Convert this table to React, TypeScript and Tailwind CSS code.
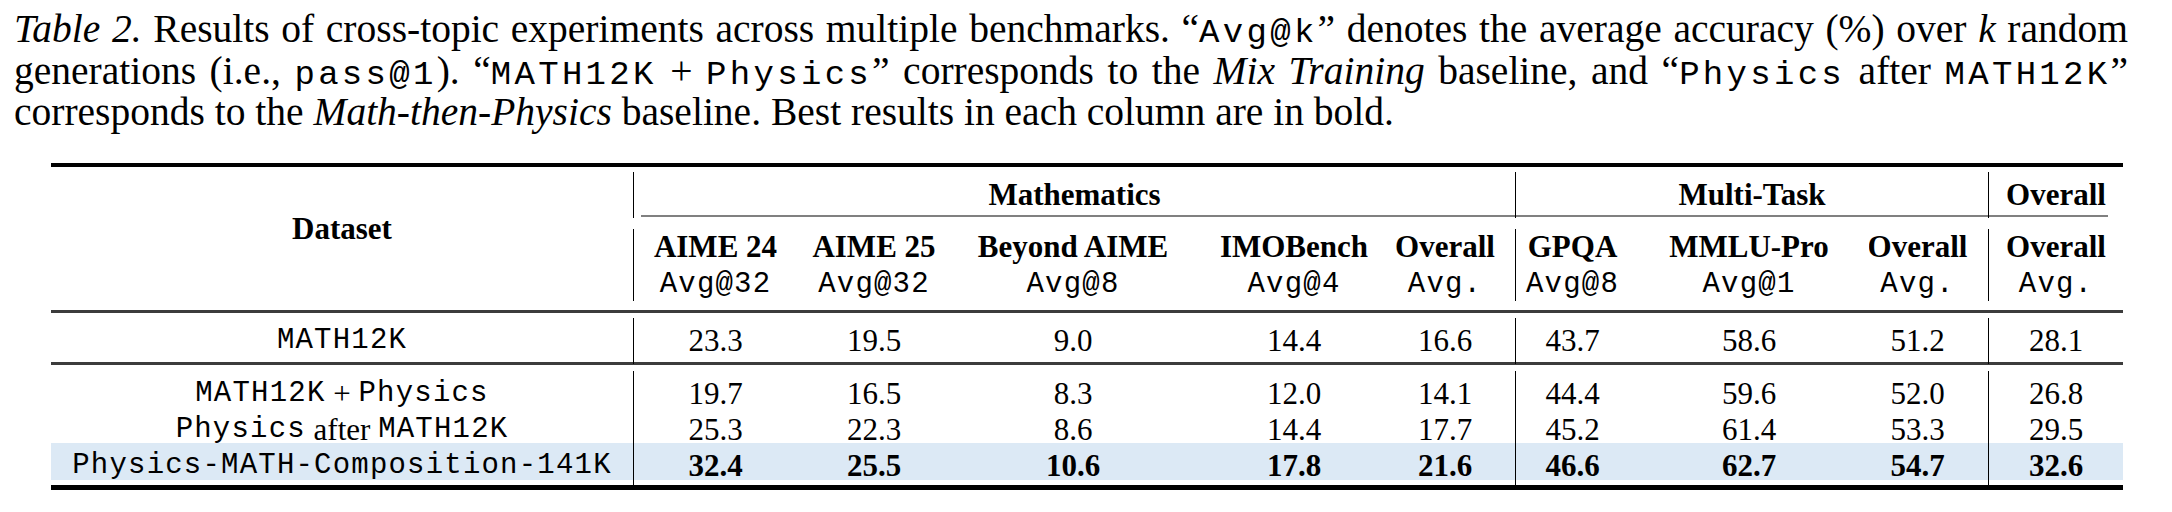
import React from "react";

const serif = "font-['Liberation_Serif','Times_New_Roman',serif]";
const mono = "font-['Liberation_Mono','Courier_New',monospace]";

const rowGrid =
  "grid grid-cols-[582px_164px_154px_244px_198px_122px_114px_240px_119px_135px]";
const headGrid =
  "grid grid-cols-[164px_154px_244px_198px_122px_114px_240px_119px_135px]";

// per value column: separators and small nudges so centres line up with the PDF
const colClass = [
  "border-l border-black",
  "",
  "",
  "",
  "pr-[18px]",
  "border-l border-black",
  "",
  "pr-[22px]",
  "border-l border-black",
];

const subHeaders = [
  ["AIME 24", "Avg@32"],
  ["AIME 25", "Avg@32"],
  ["Beyond AIME", "Avg@8"],
  ["IMOBench", "Avg@4"],
  ["Overall", "Avg."],
  ["GPQA", "Avg@8"],
  ["MMLU-Pro", "Avg@1"],
  ["Overall", "Avg."],
  ["Overall", "Avg."],
];

// Courier-ish typewriter text: slightly smaller glyphs, same advance via tracking
const Code = ({ children }: { children: React.ReactNode }) => (
  <span className={`${mono} text-[34px] tracking-[3.3px]`}>{children}</span>
);

const Tt = ({ children }: { children: React.ReactNode }) => (
  <span className={`${mono} text-[29px] tracking-[1.2px]`}>{children}</span>
);

interface RowProps {
  label: React.ReactNode;
  values: string[];
  bold?: boolean;
  height: string;
  highlight?: boolean;
}

const Row: React.FC<RowProps> = ({ label, values, bold, height, highlight }) => (
  <div className={`${rowGrid} ${height} ${highlight ? "bg-[#dce9f5]" : ""}`}>
    <div className="flex items-center justify-center whitespace-pre">{label}</div>
    {values.map((v, i) => (
      <div
        key={i}
        className={`flex items-center justify-center ${colClass[i]} ${
          bold ? "font-bold" : ""
        }`}
      >
        {v}
      </div>
    ))}
  </div>
);

export default function App() {
  return (
    <div className={`w-[2172px] h-[512px] bg-white text-black ${serif}`}>
      {/* caption */}
      <div className="pl-[14px] pt-[9px] w-[2128px] text-[39.5px] leading-[41.5px]">
        <div className="h-[41.5px] text-justify [text-align-last:justify] whitespace-nowrap">
          <i>Table 2.</i> Results of cross-topic experiments across multiple benchmarks. “
          <Code>Avg@k</Code>” denotes the average accuracy (%) over <i>k</i> random
        </div>
        <div className="h-[41.5px] text-justify [text-align-last:justify] whitespace-nowrap">
          generations (i.e., <Code>pass@1</Code>). “<Code>MATH12K</Code> +{" "}
          <Code>Physics</Code>” corresponds to the <i>Mix Training</i> baseline, and “
          <Code>Physics</Code> after <Code>MATH12K</Code>”
        </div>
        <div className="h-[41.5px] whitespace-nowrap">
          corresponds to the <i>Math-then-Physics</i> baseline. Best results in each
          column are in bold.
        </div>
      </div>

      {/* table */}
      <div className="ml-[51px] mt-[29px] w-[2072px] text-[31px]">
        <div className="h-[4px] bg-black" />

        <div className="flex">
          <div className="w-[582px] flex items-center justify-center pb-[17px] font-bold">
            Dataset
          </div>
          <div className="w-[1490px]">
            <div className="pt-[5px] pb-[5px]">
              <div className="grid grid-cols-[882px_473px_135px] h-[38px] font-bold">
                <div className="flex items-center justify-center border-l border-black">
                  Mathematics
                </div>
                <div className="flex items-center justify-center border-l border-black">
                  Multi-Task
                </div>
                <div className="flex items-center justify-center border-l border-black">
                  Overall
                </div>
              </div>
            </div>
            <div className="h-[2px] bg-[#808080] ml-[8px] mr-[15px]" />
            <div className="pt-[12px] pb-[9px]">
              <div className={`${headGrid} h-[72px]`}>
                {subHeaders.map(([name, metric], i) => (
                  <div
                    key={i}
                    className={`flex flex-col items-center justify-start overflow-hidden ${colClass[i]}`}
                  >
                    <span className="font-bold leading-[36px]">{name}</span>
                    <span className={`${mono} text-[29px] tracking-[1.2px] leading-[33px] mt-[3px]`}>
                      {metric}
                    </span>
                  </div>
                ))}
              </div>
            </div>
          </div>
        </div>

        <div className="h-[3px] bg-[#3c3c3c]" />

        <div className="pt-[5px] pb-[5px]">
          <Row
            label={<Tt>MATH12K</Tt>}
            values={["23.3", "19.5", "9.0", "14.4", "16.6", "43.7", "58.6", "51.2", "28.1"]}
            height="h-[39px]"
          />
        </div>

        <div className="h-[3px] bg-[#3c3c3c]" />

        <div className="pt-[6px] pb-[5px]">
          <Row
            label={
              <>
                <Tt>MATH12K</Tt> + <Tt>Physics</Tt>
              </>
            }
            values={["19.7", "16.5", "8.3", "12.0", "14.1", "44.4", "59.6", "52.0", "26.8"]}
            height="h-[36px]"
          />
          <Row
            label={
              <>
                <Tt>Physics</Tt> after <Tt>MATH12K</Tt>
              </>
            }
            values={["25.3", "22.3", "8.6", "14.4", "17.7", "45.2", "61.4", "53.3", "29.5"]}
            height="h-[36px]"
          />
          <Row
            label={<Tt>Physics-MATH-Composition-141K</Tt>}
            values={["32.4", "25.5", "10.6", "17.8", "21.6", "46.6", "62.7", "54.7", "32.6"]}
            bold
            highlight
            height="h-[37px]"
          />
        </div>

        <div className="h-[5px] bg-black" />
      </div>
    </div>
  );
}
